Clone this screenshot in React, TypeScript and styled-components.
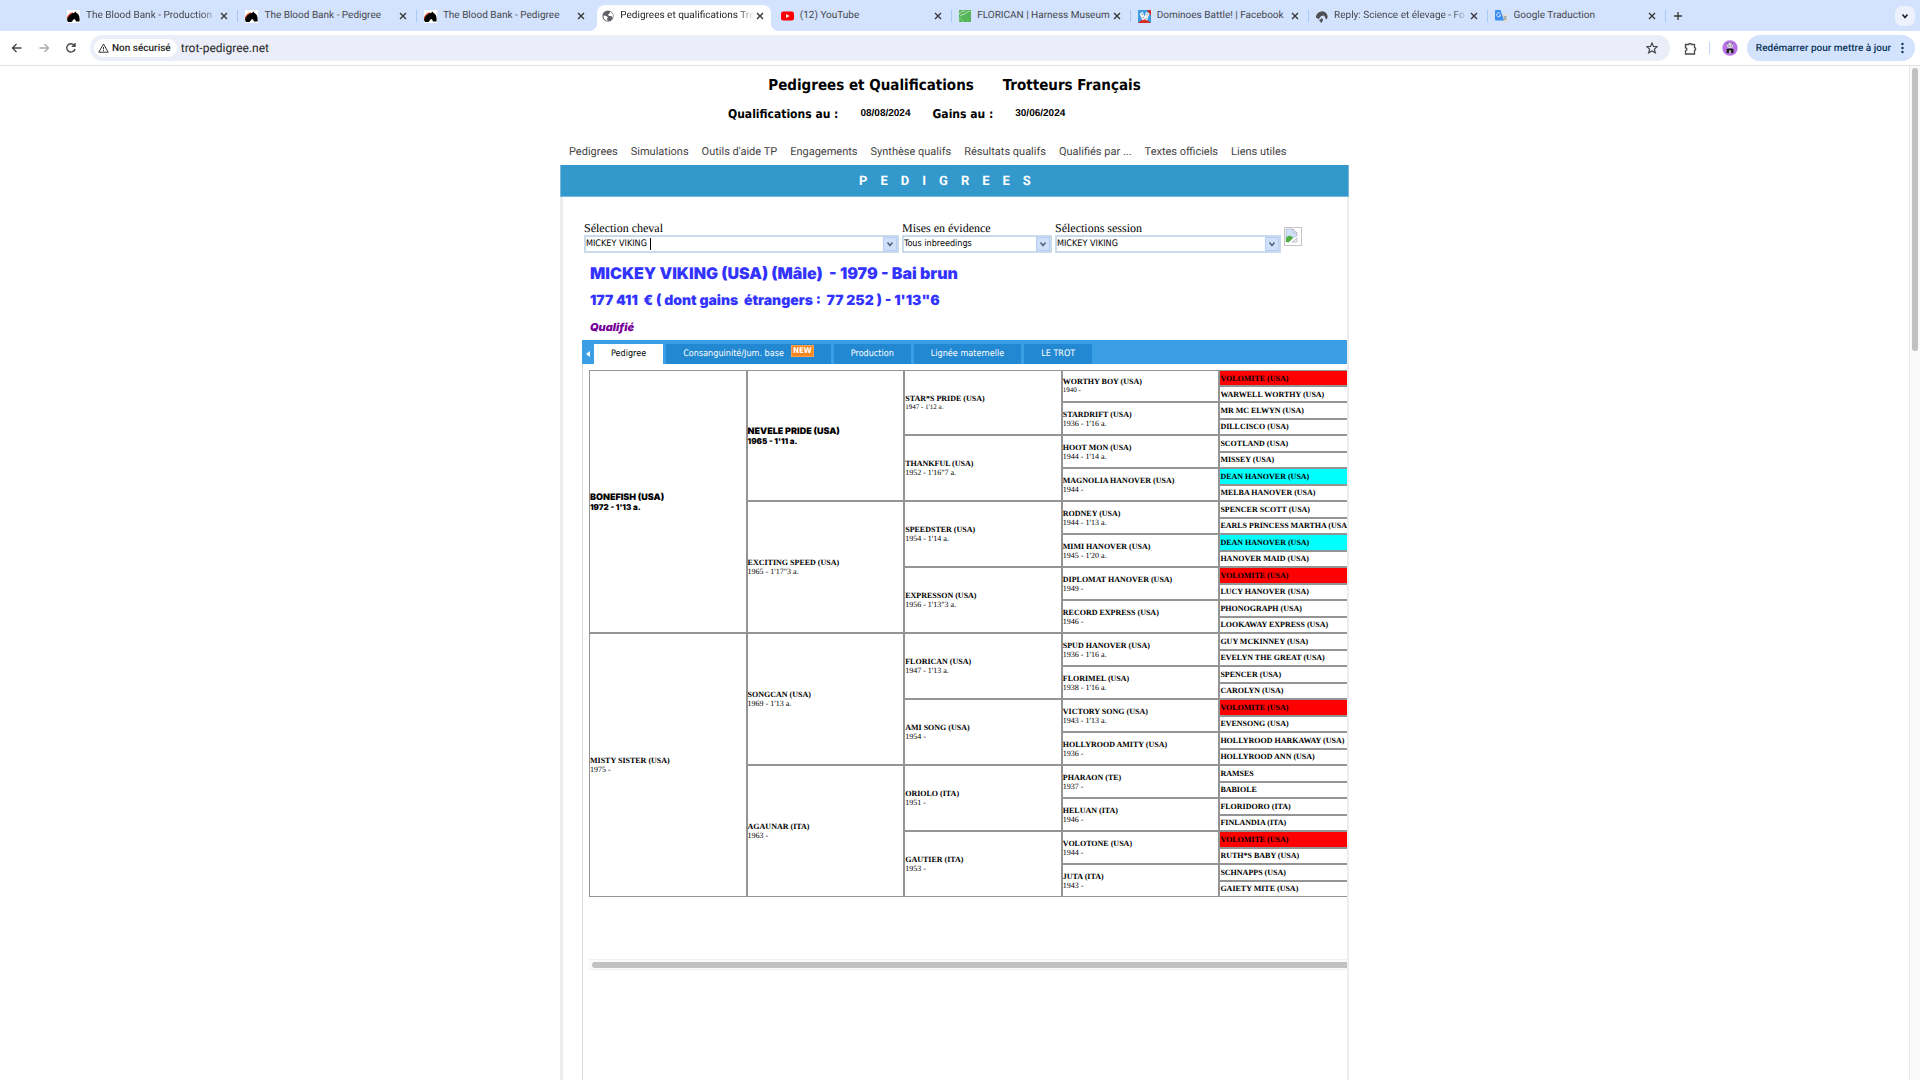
import React from "react";
import styled, { createGlobalStyle, css } from "styled-components";

const tahoma = `"DejaVu Sans Condensed", "DejaVu Sans", sans-serif`;
const roboto = `Roboto, "Liberation Sans", sans-serif`;
const times = `"Liberation Serif", serif`;
const black = `Inter, "Liberation Sans", sans-serif`;

const GlobalStyle = createGlobalStyle`
  *, *::before, *::after { box-sizing: border-box; }
  body { margin: 0; background: #fff; color: #000; font-family: ${roboto}; text-rendering: geometricPrecision; }
  button { border: 0; padding: 0; background: none; font: inherit; color: inherit; }
  input, select, button { text-rendering: inherit; }
  a { color: inherit; text-decoration: none; }
  h1, h2, p { margin: 0; }
`;

const Window = styled.div`
  display: flex;
  flex-direction: column;
  height: 100vh;
  overflow: hidden;
`;

/* ---------- browser chrome ---------- */

const TabStrip = styled.div`
  display: flex;
  align-items: stretch;
  height: 31px;
  padding-left: 60px;
  background: #d3e2fd;
`;

const Tab = styled.div<{ $active?: boolean; $divider?: boolean }>`
  position: relative;
  flex: 1 1 0;
  min-width: 0;
  display: flex;
  align-items: center;
  padding: 1px 10px 0 7px;
  font-size: 10px;
  color: #45484d;

  ${(p) =>
    p.$divider &&
    css`
      &::after {
        content: "";
        position: absolute;
        right: 0;
        top: 10px;
        width: 1px;
        height: 12px;
        background: #a8c7fa;
      }
    `}

  ${(p) =>
    p.$active &&
    css`
      margin: 5px 3px 0 2px;
      padding: 0 7px 4px 5px;
      background: #fff;
      border-radius: 8px 8px 0 0;
      color: #1f1f1f;
      &::before,
      &::after {
        content: "";
        position: absolute;
        bottom: 0;
        width: 8px;
        height: 8px;
      }
      &::before {
        left: -8px;
        background: radial-gradient(circle at 0 0, transparent 8px, #fff 8px);
      }
      &::after {
        right: -8px;
        background: radial-gradient(circle at 100% 0, transparent 8px, #fff 8px);
      }
    `}
`;

const TabTitle = styled.button<{ $fade?: boolean }>`
  flex: 1 1 0;
  min-width: 0;
  margin: 0 2px 0 6px;
  overflow: hidden;
  white-space: nowrap;
  text-align: left;
  line-height: 16px;
  ${(p) => p.$fade && "mask-image: linear-gradient(to left, transparent, #000 16px);"}
`;

const IconButton = styled.button`
  display: flex;
  align-items: center;
  justify-content: center;
  flex: none;
`;

const CloseButton = styled(IconButton)`
  width: 8px;
  height: 8px;
`;

const StripEnd = styled.div`
  flex: none;
  display: flex;
  justify-content: space-between;
  align-items: center;
  width: 254px;
  padding: 0 5px 0 6px;
`;

const SearchTabs = styled(IconButton)`
  width: 20px;
  height: 20px;
  border-radius: 7px;
  background: #ecf1fd;
`;

const Toolbar = styled.div`
  display: flex;
  align-items: center;
  height: 35px;
  padding: 0 5px 0 10px;
  border-bottom: 1px solid #e1e3e1;
  background: #fff;
`;

const NavButtons = styled.div`
  display: flex;
  gap: 13px;
  margin-right: 12px;
`;

const NavButton = styled(IconButton)<{ $dim?: boolean }>`
  width: 14px;
  height: 14px;
  color: ${(p) => (p.$dim ? "#a9abae" : "#45484d")};
`;

const AddressBar = styled.div`
  flex: 1;
  display: flex;
  align-items: center;
  height: 26px;
  padding: 0 12px 0 4px;
  border-radius: 13px;
  background: #ebeef8;
`;

const Security = styled.button`
  display: flex;
  align-items: center;
  gap: 3px;
  height: 18px;
  padding: 0 6px 0 4px;
  border-radius: 9px;
  background: #fff;
  font-size: 10px;
  font-weight: 500;
  color: #1f1f1f;
`;

const Url = styled.input`
  flex: 1;
  min-width: 0;
  margin-left: 4px;
  padding: 0;
  border: 0;
  outline: 0;
  background: none;
  font: 12px ${roboto};
  color: #1f1f1f;
`;

const ToolbarEnd = styled.div`
  display: flex;
  align-items: center;
  margin-left: 14px;
`;

const ToolbarDivider = styled.span`
  width: 1px;
  height: 12px;
  margin: 0 12px;
  background: #bcd3fb;
`;

const UpdateButton = styled.button`
  display: flex;
  align-items: center;
  gap: 10px;
  height: 26px;
  margin-left: 9px;
  padding: 0 11px 0 9px;
  border-radius: 13px;
  background: #d3e2fd;
  font-size: 10px;
  font-weight: 500;
  white-space: nowrap;
  color: #0b3558;
`;

/* ---------- page ---------- */

const Viewport = styled.div`
  flex: 1;
  min-height: 0;
  display: flex;
`;

const Scroller = styled.div`
  flex: 1;
  min-width: 0;
  overflow: hidden;
  display: flex;
  justify-content: center;
`;

const PageScrollbar = styled.div`
  flex: none;
  width: 11px;
  padding: 2px 2px 0;
  border-left: 1px solid #e8e8e8;
  background: #fafafa;
`;

const PageThumb = styled.div`
  height: 28%;
  border-radius: 3px;
  background: #c1c1c1;
`;

const Page = styled.div`
  display: flex;
  flex-direction: column;
  width: 100%;
  max-width: 789px;
`;

const SiteTitle = styled.h1`
  display: flex;
  justify-content: center;
  gap: 29px;
  padding-top: 10px;
  font: bold 15px/18px ${tahoma};
`;

const Updated = styled.p`
  display: flex;
  align-items: center;
  gap: 22px;
  margin: 11px 0 19px;
  padding-left: 168px;
  font: bold 12px/18px ${tahoma};
`;

const UpdateDate = styled.time`
  font: bold 10px/18px "Liberation Sans", sans-serif;
`;

const Menu = styled.nav`
  display: flex;
  gap: 13px;
  padding: 0 8px 3px 9px;
  font-size: 11px;
  line-height: 20px;
  white-space: nowrap;
  color: #444;
`;

const Banner = styled.h2`
  height: 32px;
  padding-right: 6px;
  background: #3399cc;
  border: 1px solid #7ab8dc;
  border-width: 0 1px 1px;
  color: #fff;
  font: bold 13px/33px ${roboto};
  letter-spacing: 13px;
  text-align: center;
`;

const Body = styled.main`
  flex: 1;
  display: flex;
  flex-direction: column;
  padding-left: 19px;
  border: solid #ededed;
  border-width: 0 2px 0 3px;
  overflow: hidden;
`;

const Form = styled.form`
  display: flex;
  align-items: flex-end;
  gap: 3px;
  padding: 24px 0 0 2px;
`;

const Group = styled.div<{ $width: number }>`
  width: ${(p) => p.$width}px;
  display: flex;
  flex-direction: column;
  font: 12px/14px ${times};
`;

const Field = styled.div`
  position: relative;
  display: flex;
  height: 18px;
  border: 2px solid #c9daea;
  background: #fff;
  font: 9px/14px ${tahoma};
`;

const ComboInput = styled.input`
  field-sizing: content;
  padding: 0;
  border: 0;
  outline: 0;
  font: inherit;
`;

const Caret = styled.span`
  width: 1px;
  height: 12px;
  margin: 1px auto 0 3px;
  background: #000;
`;

const ComboSelect = styled.select`
  flex: 1;
  appearance: none;
  padding: 0 16px 0 0;
  border: 0;
  outline: 0;
  background: none;
  color: #000;
  font: inherit;
`;

const dropLook = css`
  display: flex;
  align-items: center;
  justify-content: center;
  width: 14px;
  height: 14px;
  background: #cfe0fb;
  border: 1px solid #b7cdf3;
`;

const DropButton = styled.button`
  ${dropLook}
`;

const DropMark = styled.span`
  ${dropLook}
  position: absolute;
  right: 0;
  top: 0;
  pointer-events: none;
`;

const MissingImage = styled.span`
  display: flex;
  align-items: flex-start;
  width: 18px;
  height: 19px;
  margin-bottom: 7px;
  border: 1px solid #c4c4c4;
`;

const Horse = styled.section`
  padding: 6px 0 0 8px;
  color: #3333ff;
  font-family: ${black};
  font-weight: 900;
  white-space: pre;
`;

const HorseName = styled.h2`
  font-size: 16px;
  line-height: 28px;
  font-weight: 900;
`;

const Earnings = styled.p`
  font-size: 14px;
  line-height: 28px;
`;

const Status = styled.p`
  font-size: 11px;
  line-height: 25px;
  font-style: italic;
  color: #770099;
`;

const Tabs = styled.div`
  display: flex;
  align-items: flex-end;
  gap: 3px;
  flex: none;
  height: 24px;
  background: #3b9fe5;
`;

const ScrollLeft = styled(IconButton)`
  width: 9px;
  height: 20px;
  padding-left: 2px;
`;

const PageTab = styled.button<{ $active?: boolean }>`
  display: flex;
  align-items: center;
  gap: 7px;
  height: 20px;
  padding: 0 17px;
  font: 9px/20px ${tahoma};
  white-space: nowrap;
  background: ${(p) => (p.$active ? "#fff" : "#2288d1")};
  color: ${(p) => (p.$active ? "#000" : "#fff")};
`;

const NewBadge = styled.span`
  margin-bottom: 6px;
  padding: 0 1px;
  background: #f5861f;
  border: 1px solid #f9a24f;
  font: bold 8px/10px ${tahoma};
  color: #fff;
`;

const Panel = styled.div`
  flex: 1;
  padding: 6px 0 0 6px;
  border-left: 1px solid #dedede;
  overflow: hidden;
`;

const Pedigree = styled.table`
  width: 788px;
  table-layout: fixed;
  border-collapse: separate;
  border-spacing: 0;
  border: 0;
  font: 8px/9px ${times};
  white-space: nowrap;
`;

const Cell = styled.td<{ $tone?: string; $height?: number; $strong?: boolean; $small?: boolean }>`
  height: ${(p) => (p.$height ? p.$height + "px" : "auto")};
  padding: 0;
  border: 1px solid #949494;
  background: ${(p) => p.$tone || "#fff"};
  vertical-align: middle;
  ${(p) => p.$small && "font-size: 7px;"}
  ${(p) =>
    p.$strong &&
    css`
      font-family: ${black};
      font-weight: 900;
    `}
`;

const Name = styled.b<{ $strong?: boolean }>`
  display: block;
  font-weight: ${(p) => (p.$strong ? 900 : 700)};
  line-height: ${(p) => (p.$strong ? 11 : 9)}px;
  font-size: ${(p) => (p.$strong ? 9 : 8)}px;
`;

const Track = styled.div`
  height: 11px;
  margin-top: 62px;
  padding: 2px 0 0 3px;
  border: solid #f0f0f0;
  border-width: 1px 0;
  background: #fafafa;
`;

const Thumb = styled.div`
  height: 6px;
  border-radius: 3px 0 0 3px;
  background: #c1c1c1;
`;

/* ---------- drawings ---------- */

const Close = () => (
  <svg width="8" height="8" viewBox="0 0 8 8" stroke="#333" strokeWidth="1.3">
    <path d="M1 1l6 6M7 1L1 7" />
  </svg>
);

const HorseIcon = () => (
  <svg width="13" height="13" viewBox="0 0 13 13">
    <rect width="13" height="13" fill="#fff" />
    <path d="M0 9C1 6 3 3.500 6 3" stroke="#e0491f" strokeWidth="1.4" fill="none" />
    <path d="M0 10c1-3 3-6.500 7-7l1.500-1.500 1 1.500C12 4 13 7 12.500 11.500H9C8.500 10 8 9.200 7 9L4.500 12 1 12z" fill="#000" />
  </svg>
);

const GlobeIcon = () => (
  <svg width="12" height="12" viewBox="0 0 12 12">
    <circle cx="6" cy="6" r="5.600" fill="#5f6368" />
    <path d="M1.500 5.500l3 .500 1.500 1.500-1 1 .500 2.500C3 10.500 1.300 8.500 1.500 5.500zM5 1.500h3v1.500L6 4.500l1 1.500h2.500L10.500 8c1-2 .500-4.500-1-5.500L8 1.500z" fill="#fff" />
  </svg>
);

const YouTubeIcon = () => (
  <svg width="13" height="12" viewBox="0 0 13 12">
    <rect y="1.500" width="13" height="9" rx="2.200" fill="#f00" />
    <path d="M5 4l3.500 2L5 8z" fill="#fff" />
  </svg>
);

const MuseumIcon = () => (
  <svg width="12" height="12" viewBox="0 0 12 12">
    <rect width="12" height="12" fill="#56b558" />
    <path d="M0 4C2 2 3 1 6 1M1 6c2-2 4-1 6-3s3-1 4-2" stroke="#d6f0d6" strokeWidth=".8" fill="none" />
    <path d="M0 12V8c2 0 3 1 4 4" stroke="#a5dba6" strokeWidth=".6" fill="none" />
  </svg>
);

const DominoIcon = () => (
  <svg width="13" height="13" viewBox="0 0 13 13">
    <rect width="13" height="13" fill="#3d9be0" />
    <path d="M0 13l6-5 7 5z" fill="#d82b22" />
    <path d="M9 0h4v6z" fill="#d82b22" />
    <path d="M1.500 4l3-2.500 3 7-3 2zM8 2l3.500 1.500-2.500 7-3-1.500z" fill="#eef2f5" />
    <path d="M4 3.500l.5 1.200M5 7l.5 1M9 4v1.200M8 8v1" stroke="#7d8790" strokeWidth="1" />
  </svg>
);

const ForumIcon = () => (
  <svg width="12" height="13" viewBox="0 0 12 13">
    <path d="M0 8A5.800 5.800 0 0111.700 6.500L10.800 9.500 9.500 8.500C9 5.500 7 4.800 5.500 6 4 7 3.500 8.500 2 9.500L1.500 8z" fill="#4f5254" />
    <path d="M3 10.500l3-2.500 1 2-1.500 3z" fill="#4f5254" />
  </svg>
);

const TranslateIcon = () => (
  <svg width="13" height="13" viewBox="0 0 13 13">
    <path d="M6 4h6.500v8.500H8.500z" fill="#e3ded5" />
    <path d="M1 0h4.500l3.500 10.500H1a1 1 0 01-1-1V1a1 1 0 011-1z" fill="#3b8ef0" />
    <path d="M5.200 3.500a2 2 0 10.400 1.600H4" stroke="#cfe4ff" strokeWidth="1" fill="none" />
    <path d="M8.500 7h3M10 6v1M11 7l-2 3M9.500 8l2 2" stroke="#7a8794" strokeWidth=".7" fill="none" />
  </svg>
);

const Chevron = ({ color = "#5a6478" }: { color?: string }) => (
  <svg width="8" height="8" viewBox="0 0 8 8" fill="none" stroke={color} strokeWidth="1.6">
    <path d="M1.500 2.500L4 5.500l2.500-3" />
  </svg>
);

const Arrow = ({ flip }: { flip?: boolean }) => (
  <svg width="12" height="12" viewBox="0 0 12 12" fill="none" stroke="currentColor" strokeWidth="1.400">
    <path d={flip ? "M1.500 6h9M6.500 2L10.500 6l-4 4" : "M10.500 6h-9M5.500 2L1.500 6l4 4"} />
  </svg>
);

const Reload = () => (
  <svg width="12" height="12" viewBox="0 0 12 12" fill="none" stroke="currentColor" strokeWidth="1.400">
    <path d="M10 7A4.200 4.200 0 119 3L10 4.200M10 1v3.300H6.800" />
  </svg>
);

/* ---------- data ---------- */

const browserTabs = [
  { icon: <HorseIcon />, title: "The Blood Bank - Production", divider: true, fade: true },
  { icon: <HorseIcon />, title: "The Blood Bank - Pedigree", divider: true },
  { icon: <HorseIcon />, title: "The Blood Bank - Pedigree" },
  { icon: <GlobeIcon />, title: "Pedigrees et qualifications Tro", active: true, fade: true },
  { icon: <YouTubeIcon />, title: "(12) YouTube", divider: true },
  { icon: <MuseumIcon />, title: "FLORICAN | Harness Museum", divider: true },
  { icon: <DominoIcon />, title: "Dominoes Battle! | Facebook", divider: true },
  { icon: <ForumIcon />, title: "Reply: Science et élevage - Fo", divider: true, fade: true },
  { icon: <TranslateIcon />, title: "Google Traduction", divider: true },
];

const menu = [
  "Pedigrees",
  "Simulations",
  "Outils d'aide TP",
  "Engagements",
  "Synthèse qualifs",
  "Résultats qualifs",
  "Qualifiés par ...",
  "Textes officiels",
  "Liens utiles",
];

type Ancestor = [name: string, record?: string];

const generations: Ancestor[][] = [
  [["BONEFISH (USA)", "1972 - 1'13 a."], ["MISTY SISTER (USA)", "1975 -"]],
  [
    ["NEVELE PRIDE (USA)", "1965 - 1'11 a."],
    ["EXCITING SPEED (USA)", `1965 - 1'17"3 a.`],
    ["SONGCAN (USA)", "1969 - 1'13 a."],
    ["AGAUNAR (ITA)", "1963 -"],
  ],
  [
    ["STAR*S PRIDE (USA)", "1947 - 1'12 a."],
    ["THANKFUL (USA)", `1952 - 1'16"7 a.`],
    ["SPEEDSTER (USA)", "1954 - 1'14 a."],
    ["EXPRESSON (USA)", `1956 - 1'13"3 a.`],
    ["FLORICAN (USA)", "1947 - 1'13 a."],
    ["AMI SONG (USA)", "1954 -"],
    ["ORIOLO (ITA)", "1951 -"],
    ["GAUTIER (ITA)", "1953 -"],
  ],
  [
    ["WORTHY BOY (USA)", "1940 -"],
    ["STARDRIFT (USA)", "1936 - 1'16 a."],
    ["HOOT MON (USA)", "1944 - 1'14 a."],
    ["MAGNOLIA HANOVER (USA)", "1944 -"],
    ["RODNEY (USA)", "1944 - 1'13 a."],
    ["MIMI HANOVER (USA)", "1945 - 1'20 a."],
    ["DIPLOMAT HANOVER (USA)", "1949 -"],
    ["RECORD EXPRESS (USA)", "1946 -"],
    ["SPUD HANOVER (USA)", "1936 - 1'16 a."],
    ["FLORIMEL (USA)", "1938 - 1'16 a."],
    ["VICTORY SONG (USA)", "1943 - 1'13 a."],
    ["HOLLYROOD AMITY (USA)", "1936 -"],
    ["PHARAON (TE)", "1937 -"],
    ["HELUAN (ITA)", "1946 -"],
    ["VOLOTONE (USA)", "1944 -"],
    ["JUTA (ITA)", "1943 -"],
  ],
  [
    "VOLOMITE (USA)", "WARWELL WORTHY (USA)", "MR MC ELWYN (USA)", "DILLCISCO (USA)",
    "SCOTLAND (USA)", "MISSEY (USA)", "DEAN HANOVER (USA)", "MELBA HANOVER (USA)",
    "SPENCER SCOTT (USA)", "EARLS PRINCESS MARTHA (USA)", "DEAN HANOVER (USA)", "HANOVER MAID (USA)",
    "VOLOMITE (USA)", "LUCY HANOVER (USA)", "PHONOGRAPH (USA)", "LOOKAWAY EXPRESS (USA)",
    "GUY MCKINNEY (USA)", "EVELYN THE GREAT (USA)", "SPENCER (USA)", "CAROLYN (USA)",
    "VOLOMITE (USA)", "EVENSONG (USA)", "HOLLYROOD HARKAWAY (USA)", "HOLLYROOD ANN (USA)",
    "RAMSES", "BABIOLE", "FLORIDORO (ITA)", "FINLANDIA (ITA)",
    "VOLOMITE (USA)", "RUTH*S BABY (USA)", "SCHNAPPS (USA)", "GAIETY MITE (USA)",
  ].map((name): Ancestor => [name]),
];

const tones: Record<string, string> = {
  "VOLOMITE (USA)": "#ff0000",
  "DEAN HANOVER (USA)": "#00ffff",
};

const qualified = ["BONEFISH (USA)", "NEVELE PRIDE (USA)"];

function PedigreeTable() {
  return (
    <Pedigree>
      <tbody>
        {generations[4].map((_, row) => (
          <tr key={row}>
            {generations.map((people, g) => {
              const span = 32 / people.length;
              if (row % span !== 0) return null;
              const [name, record] = people[row / span];
              const strong = qualified.includes(name);
              return (
                <Cell
                  key={g}
                  rowSpan={span}
                  $tone={tones[name]}
                  $height={g === 3 ? (row === 0 ? 32 : 33) : undefined}
                  $strong={strong}
                  $small={row === 0 && g > 1}
                >
                  <Name $strong={strong}>{name}</Name>
                  {record}
                </Cell>
              );
            })}
          </tr>
        ))}
      </tbody>
    </Pedigree>
  );
}

export default function App() {
  return (
    <Window>
      <GlobalStyle />
      <TabStrip>
        {browserTabs.map((t, i) => (
          <Tab key={i} $active={t.active} $divider={t.divider}>
            {t.icon}
            <TabTitle $fade={t.fade}>{t.title}</TabTitle>
            <CloseButton aria-label="Fermer">
              <Close />
            </CloseButton>
          </Tab>
        ))}
        <StripEnd>
          <IconButton aria-label="Nouvel onglet">
            <svg width="12" height="12" viewBox="0 0 12 12" stroke="#333" strokeWidth="1.300">
              <path d="M6 2v8M2 6h8" />
            </svg>
          </IconButton>
          <SearchTabs aria-label="Rechercher dans les onglets">
            <Chevron color="#222" />
          </SearchTabs>
        </StripEnd>
      </TabStrip>
      <Toolbar>
        <NavButtons>
          <NavButton aria-label="Retour"><Arrow /></NavButton>
          <NavButton aria-label="Avancer" $dim><Arrow flip /></NavButton>
          <NavButton aria-label="Recharger"><Reload /></NavButton>
        </NavButtons>
        <AddressBar>
          <Security>
            <svg width="11" height="10" viewBox="0 0 11 10" fill="none" stroke="#333">
              <path d="M5.500 1L10.200 9.200H.800zM5.500 4v2.500M5.500 7.200v1" />
            </svg>
            Non sécurisé
          </Security>
          <Url aria-label="Adresse" defaultValue="trot-pedigree.net" />
          <IconButton aria-label="Ajouter aux favoris">
            <svg width="12" height="12" viewBox="0 0 12 12" fill="none" stroke="#45484d" strokeWidth="1.200">
              <path d="M6 1l1.500 3.400 3.700.300-2.800 2.400.900 3.700L6 8.900l-3.300 1.900.900-3.700L.800 4.700l3.700-.300z" />
            </svg>
          </IconButton>
        </AddressBar>
        <ToolbarEnd>
          <IconButton aria-label="Extensions">
            <svg width="13" height="13" viewBox="0 0 13 13" fill="none" stroke="#45484d" strokeWidth="1.300">
              <path d="M1.500 2.500h3.200C4.700.900 7.300.900 7.300 2.500h3.200v3.200c1.600 0 1.600 2.600 0 2.600V12h-9V8.800c1.800 0 1.800-3 0-3z" />
            </svg>
          </IconButton>
          <ToolbarDivider />
          <IconButton aria-label="Profil">
            <svg width="16" height="16" viewBox="0 0 16 16">
              <circle cx="8" cy="8" r="7.700" fill="#b873e6" />
              <path d="M4.500 13V9.500C4.500 8 11.500 8 11.500 9.500V13z" fill="#222" />
              <ellipse cx="8" cy="5.500" rx="3" ry="2.600" fill="#ddd" />
              <path d="M5 3.500l1.500.500M11 3.500l-1.500.500M6.500 6h1M8.800 6h1" stroke="#444" />
              <path d="M7.200 10.500h1.600V13H7.200z" fill="#e8e8e8" />
            </svg>
          </IconButton>
          <UpdateButton>
            Redémarrer pour mettre à jour
            <svg width="3" height="12" viewBox="0 0 3 12" fill="#0b3558">
              <circle cx="1.500" cy="2" r="1.200" />
              <circle cx="1.500" cy="6" r="1.200" />
              <circle cx="1.500" cy="10" r="1.200" />
            </svg>
          </UpdateButton>
        </ToolbarEnd>
      </Toolbar>

      <Viewport>
        <Scroller>
          <Page>
            <SiteTitle>
              <span>Pedigrees et Qualifications</span>
              <span>Trotteurs Français</span>
            </SiteTitle>
            <Updated>
              <span>Qualifications au :</span>
              <UpdateDate>08/08/2024</UpdateDate>
              <span>Gains au :</span>
              <UpdateDate>30/06/2024</UpdateDate>
            </Updated>
            <Menu>
              {menu.map((m) => (
                <a key={m} href="#">{m}</a>
              ))}
            </Menu>
            <Banner>PEDIGREES</Banner>
            <Body>
              <Form>
                <Group $width={315}>
                  <label htmlFor="horse">Sélection cheval</label>
                  <Field>
                    <ComboInput id="horse" defaultValue="MICKEY VIKING" />
                    <Caret />
                    <DropButton type="button" aria-label="Ouvrir la liste"><Chevron /></DropButton>
                  </Field>
                </Group>
                <Group $width={150}>
                  <label htmlFor="highlight">Mises en évidence</label>
                  <Field>
                    <ComboSelect id="highlight"><option>Tous inbreedings</option></ComboSelect>
                    <DropMark><Chevron /></DropMark>
                  </Field>
                </Group>
                <Group $width={226}>
                  <label htmlFor="session">Sélections session</label>
                  <Field>
                    <ComboSelect id="session"><option>MICKEY VIKING</option></ComboSelect>
                    <DropMark><Chevron /></DropMark>
                  </Field>
                </Group>
                <MissingImage>
                  <svg width="13" height="15" viewBox="0 0 13 15">
                    <path d="M1 1h7l4 4v3l-5 2-3 4H1z" fill="#cfe0f8" stroke="#aab" strokeWidth=".6" />
                    <path d="M1 10c2-3 5-3 7 0l-4 4H1z" fill="#4caf3f" />
                    <path d="M8 1v4h4zM12 10v4H7z" fill="#e6ecf5" stroke="#99a" strokeWidth=".5" />
                  </svg>
                </MissingImage>
              </Form>
              <Horse>
                <HorseName>{"MICKEY VIKING (USA) (Mâle)  - 1979 - Bai brun"}</HorseName>
                <Earnings>{`177 411  € ( dont gains  étrangers :  77 252 ) - 1'13"6`}</Earnings>
                <Status>Qualifié</Status>
              </Horse>
              <Tabs role="tablist">
                <ScrollLeft aria-label="Onglets précédents">
                  <svg width="4" height="6" viewBox="0 0 4 6"><path d="M4 0v6L0 3z" fill="#fff" /></svg>
                </ScrollLeft>
                <PageTab role="tab" $active>Pedigree</PageTab>
                <PageTab role="tab">Consanguinité/Jum. base<NewBadge>NEW</NewBadge></PageTab>
                <PageTab role="tab">Production</PageTab>
                <PageTab role="tab">Lignée maternelle</PageTab>
                <PageTab role="tab">LE TROT</PageTab>
              </Tabs>
              <Panel>
                <PedigreeTable />
                <Track><Thumb /></Track>
              </Panel>
            </Body>
          </Page>
        </Scroller>
        <PageScrollbar><PageThumb /></PageScrollbar>
      </Viewport>
    </Window>
  );
}
